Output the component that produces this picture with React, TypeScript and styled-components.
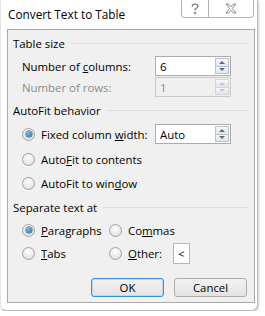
import styled, { createGlobalStyle } from "styled-components";

const GlobalStyle = createGlobalStyle`
  html, body {
    margin: 0;
    padding: 0;
    background: #ffffff;
  }
  body {
    font-family: "Open Sans", "Noto Sans", sans-serif;
    font-size: 11.4px;
    color: #000;
  }
`;

const Window = styled.div`
  box-sizing: border-box;
  width: 258px;
  height: 311px;
  background: #ffffff;
  border: 1px solid #b9b9b9;
  border-left-color: #e4e4e4;
  border-top: none;
  border-radius: 0 0 6px 6px;
  box-shadow: 1px 1px 2px rgba(0, 0, 0, 0.18);
  display: flex;
  flex-direction: column;
`;

const TitleBar = styled.div`
  height: 29px;
  display: flex;
  justify-content: space-between;
  align-items: flex-start;
  padding-left: 7px;
`;

const Title = styled.div`
  margin-top: 5px;
  line-height: 18px;
  font-size: 11.8px;
`;

const TitleButtons = styled.div`
  display: flex;
  margin-right: 3px;
`;

const TitleButton = styled.div<{ $w: number }>`
  box-sizing: border-box;
  width: ${(p) => p.$w}px;
  height: 18px;
  border: 1px solid #b4b4b4;
  border-top: none;
  display: flex;
  align-items: center;
  justify-content: center;
  &:first-child {
    border-radius: 0 0 0 4px;
    border-right: none;
  }
  &:last-child {
    border-radius: 0 0 4px 0;
  }
`;

const Panel = styled.div`
  flex: 1;
  margin: 0 2px 7px 6px;
  background: #f0f0f0;
  border: 1px solid #a9a9a9;
  padding: 5px 5px 0 5px;
  display: flex;
  flex-direction: column;
`;

const GroupHeader = styled.div<{ $mt?: number }>`
  display: flex;
  align-items: center;
  height: 16px;
  margin-top: ${(p) => p.$mt ?? 0}px;
  &::after {
    content: "";
    flex: 1;
    height: 1px;
    background: #dcdcdc;
    margin-left: 6px;
  }
`;

const Row = styled.div<{ $mt?: number; $disabled?: boolean }>`
  display: flex;
  align-items: center;
  height: 20px;
  padding-left: 9px;
  margin-top: ${(p) => p.$mt ?? 0}px;
  color: ${(p) => (p.$disabled ? "#8c8c8c" : "#000")};
`;

const FieldLabel = styled.div`
  width: 133px;
`;

const SpinBox = styled.div<{ $disabled?: boolean }>`
  box-sizing: border-box;
  width: 76px;
  height: 20px;
  border: 1px solid ${(p) => (p.$disabled ? "#c9c9c9" : "#acacac")};
  background: ${(p) => (p.$disabled ? "#f0f0f0" : "#fff")};
  display: flex;
  align-items: center;
  padding-left: 4px;
`;

const SpinValue = styled.div`
  flex: 1;
`;

const SpinButtons = styled.div`
  display: flex;
  flex-direction: column;
  width: 14px;
  height: 16px;
  margin-right: 1px;
`;

const SpinButton = styled.div<{ $disabled?: boolean }>`
  flex: 1;
  box-sizing: border-box;
  border: 1px solid ${(p) => (p.$disabled ? "#d5d5d5" : "#b8c4d2")};
  background: linear-gradient(#f6f8fa, #dfe5ec);
  display: flex;
  align-items: center;
  justify-content: center;
  &:first-child {
    border-bottom: none;
  }
`;

const Arrow = styled.div<{ $up?: boolean; $disabled?: boolean }>`
  width: 0;
  height: 0;
  border-left: 3px solid transparent;
  border-right: 3px solid transparent;
  ${(p) =>
    p.$up
      ? `border-bottom: 3px solid ${p.$disabled ? "#c4c4c4" : "#5a6a80"};`
      : `border-top: 3px solid ${p.$disabled ? "#c4c4c4" : "#5a6a80"};`}
`;

const RadioCircle = styled.span<{ $checked?: boolean }>`
  box-sizing: border-box;
  width: 13px;
  height: 13px;
  border-radius: 50%;
  border: 1px solid #a3a3a3;
  background: radial-gradient(circle at 50% 35%, #ffffff, #d8d8d8);
  display: inline-flex;
  align-items: center;
  justify-content: center;
  margin-right: 6px;
  flex-shrink: 0;
  &::after {
    content: "";
    display: ${(p) => (p.$checked ? "block" : "none")};
    width: 6px;
    height: 6px;
    border-radius: 50%;
    background: radial-gradient(circle at 40% 35%, #7cc2f2, #17609e);
    box-shadow: 0 0 0 0.5px #1d4f7e;
  }
`;

const RadioLabel = styled.label<{ $width?: number }>`
  display: flex;
  align-items: center;
  width: ${(p) => (p.$width ? `${p.$width}px` : "auto")};
`;

const U = styled.span`
  text-decoration: underline;
`;

const SmallInput = styled.div`
  box-sizing: border-box;
  width: 17px;
  height: 21px;
  border: 1px solid #b7b7b7;
  background: #fff;
  display: flex;
  align-items: center;
  justify-content: center;
  font-size: 11px;
  margin-left: 11px;
`;

const ButtonRow = styled.div`
  display: flex;
  justify-content: flex-end;
  gap: 10px;
  margin-top: 15px;
  padding-right: 2px;
`;

const DialogButton = styled.div<{ $default?: boolean }>`
  box-sizing: border-box;
  width: 73px;
  height: 19px;
  border: 1px solid ${(p) => (p.$default ? "#3c8fd0" : "#acacac")};
  box-shadow: ${(p) => (p.$default ? "inset 0 0 0 1px #b6dcf6" : "none")};
  border-radius: 3px;
  background: linear-gradient(#f2f2f2, #e3e3e3);
  display: flex;
  align-items: center;
  justify-content: center;
`;

const HelpIcon = () => (
  <svg width="10" height="12" viewBox="0 0 10 12">
    <path
      d="M2.2 3.6 C2.2 1.9 3.4 1 5 1 C6.7 1 7.8 2 7.8 3.3 C7.8 4.6 6.8 5.1 5.9 5.6 C5.3 5.9 5 6.3 5 7 L5 7.6"
      fill="none"
      stroke="#6c6c6c"
      strokeWidth="1.1"
    />
    <circle cx="5" cy="10" r="0.9" fill="none" stroke="#6c6c6c" strokeWidth="0.9" />
  </svg>
);

const CloseIcon = () => (
  <svg width="12" height="11" viewBox="0 0 12 11">
    <path
      d="M1 1 L3.5 1 L6 3.8 L8.5 1 L11 1 L7.3 5.5 L11 10 L8.5 10 L6 7.2 L3.5 10 L1 10 L4.7 5.5 Z"
      fill="#fff"
      stroke="#777"
      strokeWidth="0.9"
      strokeLinejoin="round"
    />
  </svg>
);

const Spinner = ({ value, disabled }: { value: string; disabled?: boolean }) => (
  <SpinBox $disabled={disabled}>
    <SpinValue>{value}</SpinValue>
    <SpinButtons>
      <SpinButton $disabled={disabled}>
        <Arrow $up $disabled={disabled} />
      </SpinButton>
      <SpinButton $disabled={disabled}>
        <Arrow $disabled={disabled} />
      </SpinButton>
    </SpinButtons>
  </SpinBox>
);

export default function App() {
  return (
    <>
      <GlobalStyle />
      <Window>
        <TitleBar>
          <Title>Convert Text to Table</Title>
          <TitleButtons>
            <TitleButton $w={27}>
              <HelpIcon />
            </TitleButton>
            <TitleButton $w={46}>
              <CloseIcon />
            </TitleButton>
          </TitleButtons>
        </TitleBar>
        <Panel>
          <GroupHeader>Table size</GroupHeader>
          <Row $mt={5}>
            <FieldLabel>
              Number of <U>c</U>olumns:
            </FieldLabel>
            <Spinner value="6" />
          </Row>
          <Row $mt={1} $disabled>
            <FieldLabel>Number of rows:</FieldLabel>
            <Spinner value="1" disabled />
          </Row>

          <GroupHeader $mt={5}>AutoFit behavior</GroupHeader>
          <Row $mt={6}>
            <RadioLabel $width={133}>
              <RadioCircle $checked />
              Fixed column&nbsp;<U>w</U>idth:
            </RadioLabel>
            <Spinner value="Auto" />
          </Row>
          <Row $mt={5}>
            <RadioLabel>
              <RadioCircle />
              Auto<U>F</U>it to contents
            </RadioLabel>
          </Row>
          <Row $mt={4}>
            <RadioLabel>
              <RadioCircle />
              AutoFit to win<U>d</U>ow
            </RadioLabel>
          </Row>

          <GroupHeader $mt={6}>Separate text at</GroupHeader>
          <Row $mt={5}>
            <RadioLabel $width={87}>
              <RadioCircle $checked />
              <U>P</U>aragraphs
            </RadioLabel>
            <RadioLabel>
              <RadioCircle />
              Co<U>m</U>mas
            </RadioLabel>
          </Row>
          <Row $mt={3}>
            <RadioLabel $width={87}>
              <RadioCircle />
              <U>T</U>abs
            </RadioLabel>
            <RadioLabel>
              <RadioCircle />
              <U>O</U>ther:
            </RadioLabel>
            <SmallInput>&lt;</SmallInput>
          </Row>

          <ButtonRow>
            <DialogButton $default>OK</DialogButton>
            <DialogButton>Cancel</DialogButton>
          </ButtonRow>
        </Panel>
      </Window>
    </>
  );
}
